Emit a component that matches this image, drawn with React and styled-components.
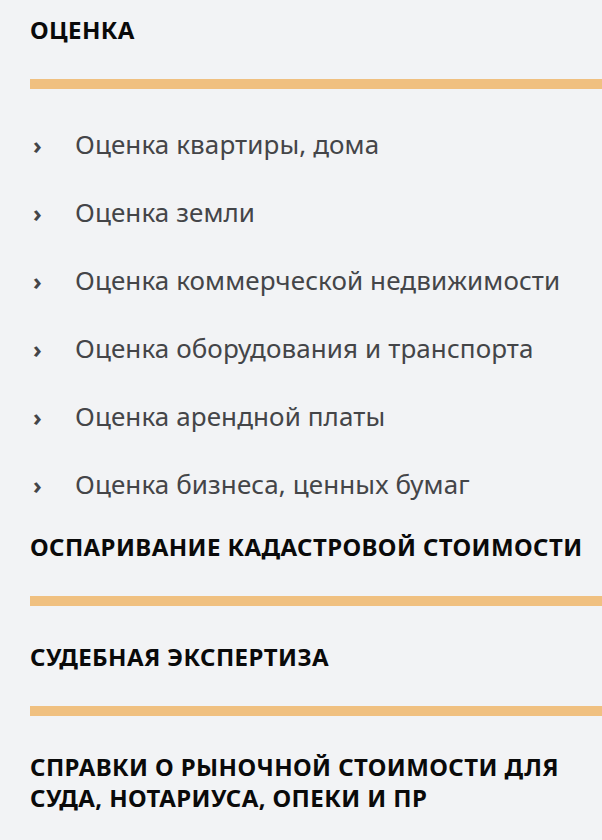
import React from "react";
import styled, { createGlobalStyle } from "styled-components";

const GlobalStyle = createGlobalStyle`
  html, body {
    margin: 0;
    padding: 0;
    background: #f2f3f5;
  }
  body {
    font-family: "Noto Sans", "Open Sans", sans-serif;
  }
`;

const Menu = styled.nav`
  padding: 14px 0 0 30px;
  background: #f2f3f5;
  height: 840px;
  overflow: hidden;
  box-sizing: border-box;
`;

const Section = styled.section`
  display: flex;
  flex-direction: column;
  margin-bottom: ${(p) => (p.$tight ? "0" : "35px")};
`;

const Title = styled.h3`
  margin: 0;
  padding-right: 10px;
  font-size: 24px;
  line-height: 31px;
  letter-spacing: 0.4px;
  font-weight: 700;
  color: #0a0a0a;
  text-transform: uppercase;
`;

const Bar = styled.div`
  height: 10px;
  margin-top: 34px;
  background: #f0c080;
`;

const List = styled.ul`
  list-style: none;
  margin: 0;
  padding: 21px 0 13px;
`;

const Item = styled.li`
  display: flex;
  align-items: center;
  height: 68px;
  font-size: 26px;
  letter-spacing: 0.1px;
  color: #444548;
`;

const Arrow = styled.span`
  width: 45px;
  padding-left: 3px;
  box-sizing: border-box;
  font-size: 24px;
  font-weight: 700;
  color: #444548;
`;

const sections = [
  {
    title: "Оценка",
    bar: true,
    links: [
      "Оценка квартиры, дома",
      "Оценка земли",
      "Оценка коммерческой недвижимости",
      "Оценка оборудования и транспорта",
      "Оценка арендной платы",
      "Оценка бизнеса, ценных бумаг",
    ],
  },
  { title: "Оспаривание кадастровой стоимости", bar: true },
  { title: "Судебная экспертиза", bar: true },
  { title: "Справки о рыночной стоимости для суда, нотариуса, опеки и пр", bar: true },
];

const App = () => {
  return (
    <>
      <GlobalStyle />
      <Menu>
        {sections.map((s) => (
          <Section key={s.title} $tight={!!s.links}>
            <Title>{s.title}</Title>
            {s.bar && <Bar />}
            {s.links && (
              <List>
                {s.links.map((l) => (
                  <Item key={l}>
                    <Arrow>›</Arrow>
                    {l}
                  </Item>
                ))}
              </List>
            )}
          </Section>
        ))}
      </Menu>
    </>
  );
};

export default App;
